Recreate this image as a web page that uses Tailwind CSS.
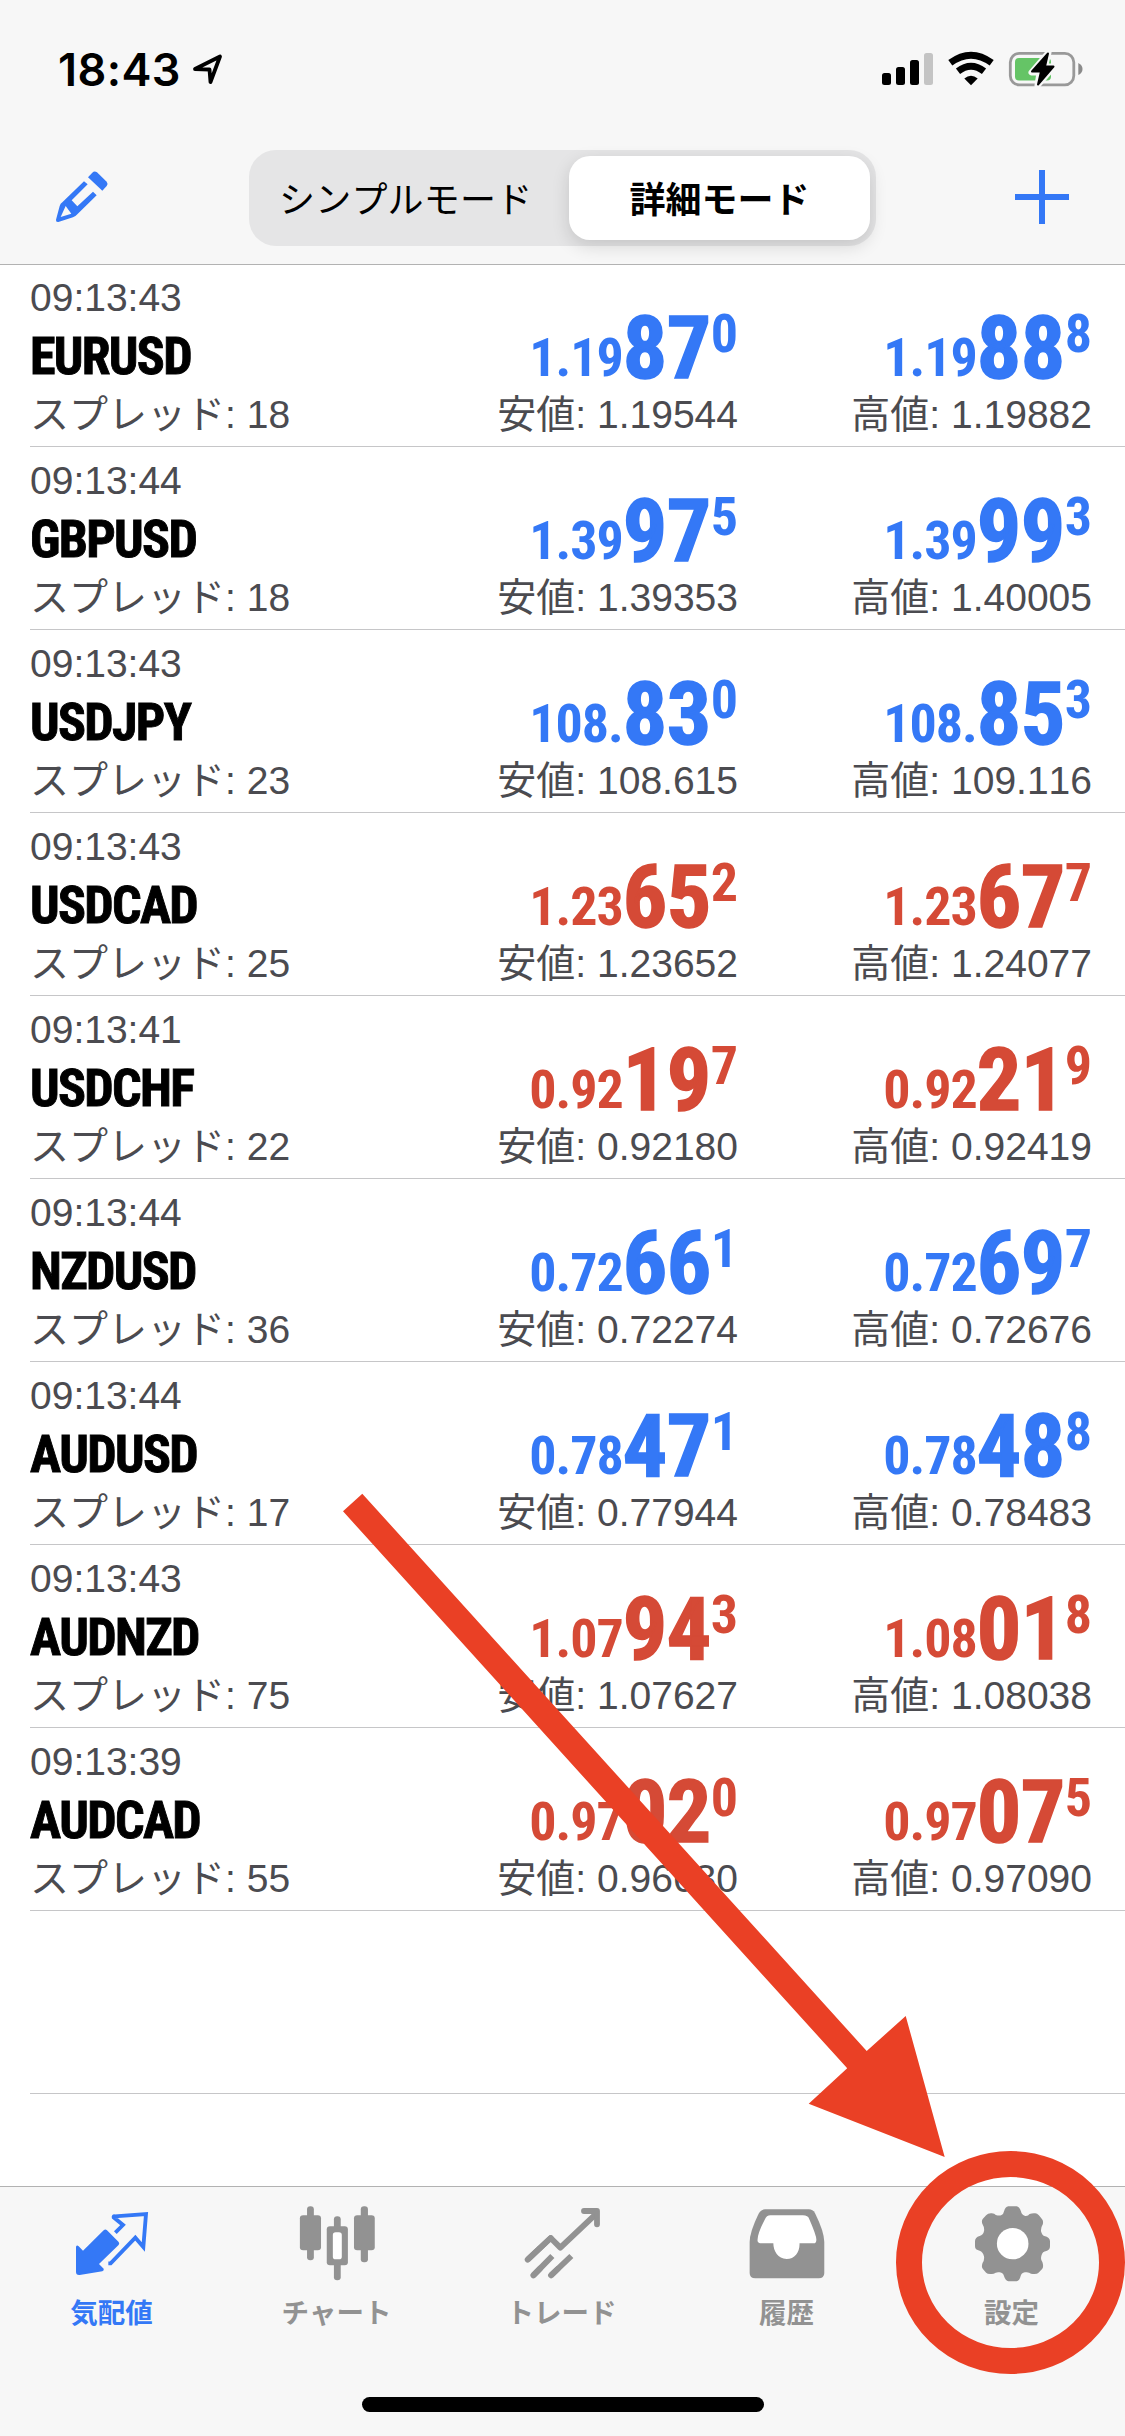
<!DOCTYPE html>
<html lang="ja">
<head>
<meta charset="utf-8">
<title>気配値</title>
<script src="https://cdn.jsdelivr.net/npm/@tailwindcss/browser@4"></script>
</head>
<body class="bg-white">
<div class="relative flex h-[2436px] w-[1125px] flex-col overflow-hidden bg-white font-['Liberation_Sans','Noto_Sans_CJK_JP',sans-serif] [font-kerning:none]">

  <header class="flex h-[265px] shrink-0 flex-col border-b border-[#b2b2b2] bg-[#f7f7f7]">
    <!-- status bar -->
    <div class="flex h-[138px] items-center pl-[58px] pr-[41px]">
      <span class="font-['Inter',sans-serif] text-[45px] font-semibold leading-none tracking-[0.400px]">18:43</span>
      <svg class="ml-[11px]" width="31" height="32" viewBox="0 0 31 32" fill="none"><path d="M3 16 28 3.500 18.500 29 17.500 16.500Z" stroke="#000" stroke-width="3.800" stroke-linejoin="round"/></svg>
      <svg class="ml-auto" width="202" height="36" viewBox="0 0 202 36">
        <rect x="0" y="22" width="9" height="12" rx="2.500"/>
        <rect x="14" y="16" width="9" height="18" rx="2.500"/>
        <rect x="28" y="9" width="9" height="25" rx="2.500"/>
        <rect x="42" y="2" width="9" height="32" rx="2.500" fill="#c4c4c4"/>
        <g fill="none" stroke="#000" stroke-width="6.800"><path d="M68.300 11.800Q89 -3.400 109.700 11.800"/><path d="M76 20.300Q89 10.200 102 20.300"/></g>
        <path d="M82.300 27.500Q89 22 95.700 27.500L89 34.200Z"/>
        <rect x="128.300" y="2.300" width="63.500" height="31.500" rx="9" fill="none" stroke="#999" stroke-width="2.800"/>
        <rect x="133" y="7" width="36" height="22.500" rx="4" fill="#65c466"/>
        <path d="M196.300 12Q200.500 14 200.500 18T196.300 24Z" fill="#8a8a8a"/>
        <path d="M166.500 1.500 149.500 21.500H157.500L155.500 34.500 172 15.500H163Z" stroke="#f7f7f7" stroke-width="6" stroke-linejoin="round"/>
        <path d="M166 2.500 150 20.500H159L156 33.500 171.500 15.500H163Z" stroke="#000" stroke-width="2" stroke-linejoin="round"/>
      </svg>
    </div>
    <!-- navigation bar -->
    <div class="flex items-start pl-[55px] pr-[56px] pt-3">
      <svg class="mt-[19px]" width="54" height="54" viewBox="0 0 162 162" fill="#3478f6">
        <path d="M99 25 112 11Q118 5 126 10L155 38Q160 44 155 51L142 65Z"/>
        <path fill-rule="evenodd" d="M87 37 98 46 50 94 67 112 114 68 125 79 67 136Q62 142 54 145L10 159Q2 160 3 152L14 111Q16 104 22 100ZM32 111 17 144 49 134Z"/>
      </svg>
      <div class="ml-[140px] flex h-24 w-[627px] rounded-[27px] bg-[#e5e5e6] p-1.5 leading-[82px] text-black">
        <span class="w-[314px] whitespace-nowrap pl-6 font-['Noto_Sans_CJK_JP',sans-serif] text-[36px] tracking-[0.200px]">シンプルモード</span>
        <span class="h-[84px] w-[301px] whitespace-nowrap rounded-[21px] bg-white text-center font-['Noto_Sans_CJK_JP',sans-serif] text-[36px] font-bold shadow-[0_6px_18px_rgba(0,0,0,0.14)]">詳細モード</span>
      </div>
      <svg class="ml-auto mt-5" width="54" height="54" viewBox="0 0 54 54" fill="#3478f6"><path d="M24 0h6v24h24v6H30v24h-6V30H0v-6h24z"/></svg>
    </div>
  </header>

  <main id="quotes" class="-mt-px flex min-h-0 flex-1 flex-col overflow-hidden pl-[30px]"></main>

  <!-- tab bar -->
  <nav class="h-[250px] shrink-0 border-t border-[#b2b2b2] bg-[#f7f7f7] font-['Noto_Sans_CJK_JP',sans-serif] text-[27.500px] font-bold leading-[40px] text-[#929292]">
    <div class="grid h-[210px] grid-cols-5">
      <div class="flex flex-col items-center text-[#3478f6]">
        <svg width="225" height="100" viewBox="0 0 675 300" fill="currentColor">
          <g transform="translate(180 24)">
            <path d="M131 106Q136 101 141 106L176 141Q180 146 175 151L117 207 131 221Q133 226 127 229L59 240Q48 241 48 231V155Q51 149 56 154L69 167Z"/>
            <path d="M166 113 189 90 161 67Q160 63 164 64L258 57 250 156 226 128 152 205H145" fill="none" stroke="currentColor" stroke-width="11.500"/>
          </g>
        </svg>
        <span class="mt-1 pr-0.5">気配値</span>
      </div>
      <div class="flex flex-col items-center">
        <svg width="225" height="100" viewBox="628 50 628 300" preserveAspectRatio="none" fill="currentColor">
          <rect x="857" y="108" width="19" height="162" rx="9"/><rect x="837" y="135" width="59" height="105" rx="9"/>
          <rect x="932" y="138" width="19" height="192" rx="9"/><rect x="912" y="168" width="59" height="117" rx="9"/>
          <rect x="929" y="186" width="25" height="81" rx="8" fill="#fff"/>
          <rect x="1007" y="108" width="20" height="168" rx="9"/><rect x="988" y="135" width="58" height="105" rx="9"/>
        </svg>
        <span class="mt-1 pr-0.5">チャート</span>
      </div>
      <div class="flex flex-col items-center">
        <svg width="225" height="100" viewBox="0 0 675 300" fill="none" stroke="currentColor" stroke-width="17.500">
          <g transform="translate(180 9)">
            <path d="M53 209 122 144 151 173 259 71" stroke-linejoin="round"/>
            <path d="M53 209 122 144M222 63H261V103" stroke-linecap="round" stroke-linejoin="round"/>
            <path d="M70 256 127 198M123 256 184 198"/>
            <path d="M70 256 90 236M123 256 143 237" stroke-linecap="round"/>
          </g>
        </svg>
        <span class="mt-1 pr-0.5">トレード</span>
      </div>
      <div class="flex flex-col items-center">
        <svg width="225" height="100" viewBox="316 170 627 300" preserveAspectRatio="none" fill="currentColor">
          <path d="M567 237H689Q700 237 706 248Q732 305 732 335V428Q732 444 716 444H540Q524 444 524 428V335Q524 305 549 250Q556 237 567 237Z"/>
          <path fill="#fff" d="M582 255H672Q687 255 690 266Q710 315 710 328Q710 339 702 339H663C664 365 650 386 627 386C603 386 590 362 590 339H554Q545 338 546 328Q546 310 566 268Q571 255 582 255Z"/>
        </svg>
        <span class="mt-1 pr-0.5">履歴</span>
      </div>
      <div class="flex flex-col items-center">
        <svg width="225" height="100" viewBox="941 170 627 300" preserveAspectRatio="none" fill="currentColor">
          <path fill-rule="evenodd" d="M1243 228H1266Q1274 229 1278 243Q1280 254 1290 257Q1298 258 1302 251Q1310 248 1318 249Q1323 249 1328 255L1337 267Q1341 272 1339 282Q1333 292 1334 303Q1337 315 1343 317Q1359 321 1359 333V348Q1359 359 1349 362Q1338 363 1335 376Q1332 388 1338 396Q1342 410 1337 416L1327 427Q1322 433 1306 430Q1300 424 1289 426Q1279 428 1277 438Q1274 452 1266 453H1243Q1235 452 1231 438Q1229 428 1219 426Q1209 424 1202 430Q1186 433 1181 427L1172 416Q1167 410 1171 398Q1177 388 1175 378Q1172 364 1163 361Q1150 359 1150 348V333Q1150 321 1163 317Q1173 314 1175 303Q1177 292 1171 282Q1167 271 1172 265L1181 255Q1186 249 1194 249Q1204 248 1208 254Q1218 257 1224 254Q1229 253 1231 243Q1234 229 1243 228Z"/>
          <ellipse cx="1255" cy="340" rx="44" ry="47" fill="#fff"/>
        </svg>
        <span class="mt-1 pr-0.5">設定</span>
      </div>
    </div>
    <div class="mx-auto h-[15px] w-[402px] rounded-full bg-black"></div>
  </nav>

  <!-- tutorial arrow and circle drawn over the screen -->
  <svg class="absolute left-0 top-0" width="1125" height="2436" viewBox="0 0 1125 2436" fill="#ea4025">
    <path d="M362.300 1493.700 866.700 2051 905.700 2016 944.700 2157 808.700 2103.700 847.200 2068.300 343 1511.300Z"/>
    <ellipse cx="1010.500" cy="2262.500" rx="101.500" ry="98.500" fill="none" stroke="#ea4025" stroke-width="26"/>
  </svg>
</div>

<script>
  const quotes = [
    ['09:13:43', 'EURUSD', 18, 'up', '1.19', '87', '0', '1.19544', '1.19', '88', '8', '1.19882'],
    ['09:13:44', 'GBPUSD', 18, 'up', '1.39', '97', '5', '1.39353', '1.39', '99', '3', '1.40005'],
    ['09:13:43', 'USDJPY', 23, 'up', '108.', '83', '0', '108.615', '108.', '85', '3', '109.116'],
    ['09:13:43', 'USDCAD', 25, 'down', '1.23', '65', '2', '1.23652', '1.23', '67', '7', '1.24077'],
    ['09:13:41', 'USDCHF', 22, 'down', '0.92', '19', '7', '0.92180', '0.92', '21', '9', '0.92419'],
    ['09:13:44', 'NZDUSD', 36, 'up', '0.72', '66', '1', '0.72274', '0.72', '69', '7', '0.72676'],
    ['09:13:44', 'AUDUSD', 17, 'up', '0.78', '47', '1', '0.77944', '0.78', '48', '8', '0.78483'],
    ['09:13:43', 'AUDNZD', 75, 'down', '1.07', '94', '3', '1.07627', '1.08', '01', '8', '1.08038'],
    ['09:13:39', 'AUDCAD', 55, 'down', '0.97', '02', '0', '0.96630', '0.97', '07', '5', '0.97090']
  ];
  const price = (dir, a, b, c, label, v) => `
    <div class="flex w-[354px] flex-col items-end pt-[40px]">
      <div class="flex h-[88px] font-['Roboto_Condensed','Roboto',sans-serif] font-bold ${dir === 'up' ? 'text-[#3478f6]' : 'text-[#d54a36]'}">
        <span class="mt-[27px] h-[54px] text-[54px] leading-[54px] tracking-[-1px]">${a}</span>
        <span class="h-[88px] text-[88px] leading-[88px] tracking-[-0.500px] [-webkit-text-stroke:1.500px]">${b}</span>
        <span class="mt-[3px] h-[54px] text-[54px] leading-[54px]">${c}</span>
      </div>
      <div class="-mt-px h-10 whitespace-nowrap leading-[40px]"><span class="font-['Noto_Sans_CJK_JP',sans-serif] font-normal">${label}</span>: ${v}</div>
    </div>`;
  document.getElementById('quotes').innerHTML = quotes.map(q => `
    <section class="flex h-[183px] shrink-0 border-b border-[#c6c6c8] text-[39px] text-[#4b4b50]">
      <div class="flex w-[354px] flex-col pt-3.5">
        <div class="h-10 leading-[40px]">${q[0]}</div>
        <div class="mt-[13px] h-[52px] font-['Roboto_Condensed','Roboto',sans-serif] text-[52px] font-bold leading-[52px] tracking-[-1.700px] text-black [-webkit-text-stroke:0.900px]">${q[1]}</div>
        <div class="mt-2 h-10 whitespace-nowrap leading-[40px]"><span class="font-['Noto_Sans_CJK_JP',sans-serif] font-normal">スプレッド</span>: ${q[2]}</div>
      </div>
      ${price(q[3], q[4], q[5], q[6], '安値', q[7])}
      ${price(q[3], q[8], q[9], q[10], '高値', q[11])}
    </section>`).join('') + '<section class="h-[183px] shrink-0 border-b border-[#c6c6c8]"></section>';
</script>
</body>
</html>
